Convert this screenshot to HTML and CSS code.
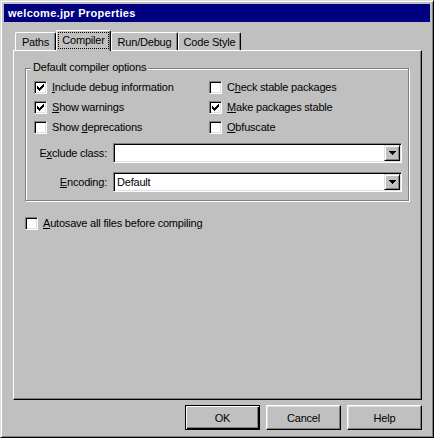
FILE: index.html
```html
<!DOCTYPE html>
<html>
<head>
<meta charset="utf-8">
<title>welcome.jpr Properties</title>
<link rel="stylesheet" href="styles.css">
</head>
<body>
<div class="dialog">
  <div class="titlebar">welcome.jpr Properties</div>
  <div class="main">
    <div class="tabs">
      <div class="tab tab-paths">Paths</div>
      <div class="tab tab-compiler tab-active"><span class="focus">Compiler</span></div>
      <div class="tab tab-run">Run/Debug</div>
      <div class="tab tab-code">Code Style</div>
    </div>
    <div class="panel">
      <div class="group">
        <div class="legend">Default compiler options</div>
        <div class="checks">
          <div class="check"><span class="cb"><svg width="11" height="11" viewBox="0 0 11 11" shape-rendering="crispEdges"><path d="M2 4h1v3h-1zM3 5h1v3h-1zM4 6h1v3h-1zM5 5h1v3h-1zM6 4h1v3h-1zM7 3h1v3h-1zM8 2h1v3h-1z" fill="#000"/></svg></span><span><u>I</u>nclude debug information</span></div>
          <div class="check"><span class="cb"></span><span>C<u>h</u>eck stable packages</span></div>
          <div class="check"><span class="cb"><svg width="11" height="11" viewBox="0 0 11 11" shape-rendering="crispEdges"><path d="M2 4h1v3h-1zM3 5h1v3h-1zM4 6h1v3h-1zM5 5h1v3h-1zM6 4h1v3h-1zM7 3h1v3h-1zM8 2h1v3h-1z" fill="#000"/></svg></span><span><u>S</u>how warnings</span></div>
          <div class="check"><span class="cb"><svg width="11" height="11" viewBox="0 0 11 11" shape-rendering="crispEdges"><path d="M2 4h1v3h-1zM3 5h1v3h-1zM4 6h1v3h-1zM5 5h1v3h-1zM6 4h1v3h-1zM7 3h1v3h-1zM8 2h1v3h-1z" fill="#000"/></svg></span><span><u>M</u>ake packages stable</span></div>
          <div class="check"><span class="cb"></span><span>Show <u>d</u>eprecations</span></div>
          <div class="check"><span class="cb"></span><span><u>O</u>bfuscate</span></div>
        </div>
        <div class="fields">
          <div class="field">
            <span class="field-label">E<u>x</u>clude class:</span>
            <div class="combo"><span class="combo-value"></span><span class="drop"><svg width="7" height="4" viewBox="0 0 7 4" shape-rendering="crispEdges"><path d="M0 0h7v1h-1v1h-1v1h-1v1h-1v-1h-1v-1h-1v-1h-1z" fill="#000"/></svg></span></div>
          </div>
          <div class="field">
            <span class="field-label"><u>E</u>ncoding:</span>
            <div class="combo"><span class="combo-value">Default</span><span class="drop"><svg width="7" height="4" viewBox="0 0 7 4" shape-rendering="crispEdges"><path d="M0 0h7v1h-1v1h-1v1h-1v1h-1v-1h-1v-1h-1v-1h-1z" fill="#000"/></svg></span></div>
          </div>
        </div>
      </div>
      <div class="check autosave"><span class="cb"></span><span><u>A</u>utosave all files before compiling</span></div>
    </div>
    <div class="buttons">
      <div class="btn btn-default">OK</div>
      <div class="btn">Cancel</div>
      <div class="btn">Help</div>
    </div>
  </div>
</div>
</body>
</html>
```
FILE: styles.css
```css
body {
  margin: 0;
  background: #fff;
  font-family: "Liberation Sans", Arial, sans-serif;
  font-size: 11px;
  color: #000;
  letter-spacing: -0.2px;
}

.dialog {
  width: 434px;
  height: 438px;
  box-sizing: border-box;
  background: #c0c0c0;
  border: 1px solid;
  border-color: #dfdfdf #000 #000 #dfdfdf;
  box-shadow: inset 1px 1px #fff, inset -1px -1px #808080;
  padding: 3px;
  display: flex;
  flex-direction: column;
}

.titlebar {
  height: 18px;
  line-height: 18px;
  background: #000080;
  color: #fff;
  font-weight: bold;
  letter-spacing: 0.3px;
  padding-left: 4px;
  white-space: nowrap;
}

.main {
  flex: 1;
  display: flex;
  flex-direction: column;
  padding: 0 8px 0 9px;
}

.tabs {
  display: flex;
  align-items: flex-end;
  height: 20px;
  margin-top: 8px;
  padding-left: 2px;
}

.tab {
  box-sizing: border-box;
  height: 18px;
  border-top: 1px solid #fff;
  border-left: 1px solid #fff;
  border-right: 1px solid #000;
  border-radius: 2px 2px 0 0;
  box-shadow: inset -1px 0 #808080;
  text-align: center;
  line-height: 13px;
  padding-top: 3px;
  white-space: nowrap;
}

.tab-paths { width: 41px; }
.tab-compiler { width: 55px; }
.tab-run { width: 67px; }
.tab-code { width: 63px; }

.tab-active {
  height: 21px;
  margin-bottom: -1px;
  background: #c0c0c0;
  position: relative;
  z-index: 1;
  padding-top: 1px;
}

.focus {
  display: block;
  box-sizing: border-box;
  width: 51px;
  height: 17px;
  margin-left: 1px;
  border: 1px dotted #000;
  padding-top: 1px;
  line-height: 13px;
}

.panel {
  box-sizing: border-box;
  width: 409px;
  height: 350px;
  border: 1px solid;
  border-color: #fff #000 #000 #fff;
  box-shadow: inset -1px -1px #808080;
  padding: 17px 0 0 11px;
}

.group {
  position: relative;
  box-sizing: border-box;
  width: 384px;
  border: 1px solid #808080;
  box-shadow: inset 1px 1px #fff, 1px 1px #fff;
  padding: 12px 6px 8px 8px;
}

.legend {
  position: absolute;
  top: -8px;
  left: 5px;
  padding: 0 2px;
  background: #c0c0c0;
  line-height: 13px;
  white-space: nowrap;
}

.checks {
  display: grid;
  grid-template-columns: 175px 1fr;
  row-gap: 7px;
}

.check {
  display: flex;
  align-items: center;
  gap: 5px;
  height: 13px;
  line-height: 13px;
  white-space: nowrap;
}

.cb {
  box-sizing: border-box;
  width: 13px;
  height: 13px;
  flex: none;
  background: #fff;
  border: 1px solid;
  border-color: #808080 #fff #fff #808080;
  box-shadow: inset 1px 1px #000, inset -1px -1px #dfdfdf;
}

.cb svg {
  display: block;
}

.fields {
  display: flex;
  flex-direction: column;
  gap: 9px;
  margin-top: 9px;
}

.field {
  display: flex;
  align-items: center;
  gap: 6px;
}

.field-label {
  width: 73px;
  flex: none;
  text-align: right;
  white-space: nowrap;
}

.combo {
  flex: 1;
  box-sizing: border-box;
  height: 20px;
  border: 1px solid;
  border-color: #808080 #fff #fff #808080;
  box-shadow: inset 1px 1px #000, inset -1px -1px #dfdfdf;
  background: #fff;
  display: flex;
  align-items: center;
}

.combo-value {
  flex: 1;
  padding-left: 3px;
}

.drop {
  box-sizing: border-box;
  width: 16px;
  height: 16px;
  margin-right: 1px;
  border: 1px solid;
  border-color: #dfdfdf #000 #000 #dfdfdf;
  box-shadow: inset 1px 1px #fff, inset -1px -1px #808080;
  background: #c0c0c0;
  display: flex;
  align-items: center;
  justify-content: center;
}

.drop svg {
  display: block;
}

.autosave {
  margin-top: 16px;
}

.buttons {
  display: flex;
  justify-content: flex-end;
  gap: 6px;
  margin-top: 5px;
}

.btn {
  box-sizing: border-box;
  width: 75px;
  height: 25px;
  border: 1px solid;
  border-color: #fff #000 #000 #fff;
  box-shadow: inset -1px -1px #808080, inset 1px 1px #dfdfdf;
  display: flex;
  align-items: center;
  justify-content: center;
}

.btn-default {
  border-color: #000;
  box-shadow: inset 1px 1px #fff, inset -1px -1px #000, inset -2px -2px #808080;
}
```
